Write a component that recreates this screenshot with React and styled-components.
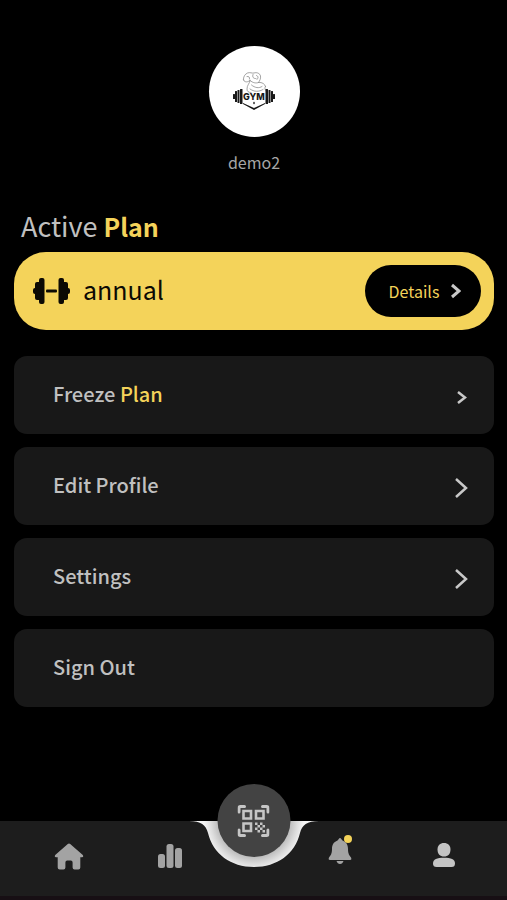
import React from 'react';
import styled, { createGlobalStyle } from 'styled-components';

const colors = {
    accent: '#f4d35a',
    card: '#181818',
    bar: '#1d1d1d',
    text: '#c0c0c0',
    icon: '#a3a3a3'
};

const GlobalStyle = createGlobalStyle`
    *, *::before, *::after {
        box-sizing: border-box;
    }

    body {
        margin: 0;
        background: #000;
        color: ${colors.text};
        font-family: "Noto Sans CJK JP", "Noto Sans", sans-serif;
    }

    button {
        border: 0;
        padding: 0;
        font: inherit;
        cursor: pointer;
    }
`;

const Page = styled.div`
    display: flex;
    flex-direction: column;
    min-height: 100vh;
`;

const Content = styled.main`
    flex: 1;
    display: flex;
    flex-direction: column;
    padding: 46px 13px 60px 14px;
`;

const ProfileHeader = styled.header`
    display: flex;
    flex-direction: column;
    align-items: center;
    gap: 12px;
`;

const Avatar = styled.div`
    width: 91px;
    height: 91px;
    border-radius: 50%;
    background: #fff;
    overflow: hidden;
`;

const UserName = styled.div`
    font-size: 16px;
    line-height: 26px;
    color: #a6a6a6;
`;

const SectionTitle = styled.h1`
    margin: 34px 0 9px 7px;
    font-size: 27px;
    line-height: 34px;
    font-weight: 400;
`;

const Highlight = styled.span`
    color: ${colors.accent};
`;

const TitleHighlight = styled(Highlight)`
    font-size: 25px;
    font-weight: 700;
`;

const PlanCard = styled.section`
    display: flex;
    align-items: center;
    height: 78px;
    padding: 0 13px 0 19px;
    border-radius: 32px;
    background: ${colors.accent};
    color: #0c0a04;
`;

const PlanName = styled.span`
    flex: 1;
    margin-left: 13px;
    padding-bottom: 4px;
    font-size: 25px;
    line-height: 34px;
`;

const DetailsButton = styled.button`
    display: flex;
    align-items: center;
    justify-content: center;
    gap: 11px;
    width: 116px;
    height: 52px;
    padding-left: 4px;
    border-radius: 26px;
    background: #000;
    color: ${colors.accent};
    font-size: 16px;
    line-height: 26px;
`;

const Menu = styled.nav`
    display: flex;
    flex-direction: column;
    gap: 13px;
    margin-top: 26px;
`;

const MenuButton = styled.button`
    display: flex;
    align-items: center;
    justify-content: space-between;
    height: 78px;
    padding: 4px 26px 0 39px;
    border-radius: 13px;
    background: ${colors.card};
    color: ${colors.text};
    text-align: left;
`;

const MenuLabel = styled.span`
    padding-bottom: 6px;
    font-size: 20px;
    line-height: 32px;
    font-weight: 500;
`;

const ChevronSlot = styled.span`
    display: flex;
    justify-content: center;
    width: 14px;
`;

const BottomBar = styled.nav`
    position: relative;
    display: flex;
    justify-content: space-between;
    height: 79px;
    padding: 0 52px 0 54px;
    border-bottom: 4px solid #170f14;
    background: ${colors.bar};
`;

const TabGroup = styled.div`
    flex: 1;
    display: flex;
    align-items: center;
    justify-content: space-between;
    padding-bottom: ${props => props.$bottom}px;
`;

const TabButton = styled.button`
    position: relative;
    display: flex;
    margin-bottom: ${props => (props.$raised ? 7 : 0)}px;
    background: none;
    color: ${props => (props.$active ? '#c4c4c4' : colors.icon)};
`;

const ScanSlot = styled.div`
    flex: 0 0 146px;
`;

const Notch = styled.svg`
    position: absolute;
    top: 0;
    left: 50%;
    transform: translateX(-50%);
`;

const ScanButton = styled.button`
    position: absolute;
    top: -37px;
    left: 50%;
    transform: translateX(-50%);
    display: flex;
    align-items: center;
    justify-content: center;
    width: 73px;
    height: 73px;
    border-radius: 50%;
    background: #434343;
    color: #c6c6c6;
`;

const Badge = styled.span`
    position: absolute;
    top: -3px;
    right: 0;
    width: 8px;
    height: 8px;
    border-radius: 50%;
    background: ${colors.accent};
`;

const Chevron = ({ width, height, stroke }) => (
    <svg width={width} height={height} viewBox={`0 0 ${width} ${height}`} fill='none' aria-hidden='true'>
        <path
            d={`M2 2L${width - 2} ${height / 2}L2 ${height - 2}`}
            stroke='#c8c8c8'
            strokeWidth={stroke}
        />
    </svg>
);

const GymLogo = () => (
    <svg width='91' height='91' viewBox='0 0 91 91' role='img' aria-label='Gym logo'>
        <g fill='none' stroke='#7c7c7c' strokeWidth='0.7' strokeLinejoin='round' strokeLinecap='round'>
            <path d='M34.500 34C34 31 36 28 38.500 27C41 26 43 27.500 45 27C48 26 51 27.500 51.500 30C52 32.500 50.500 35 49.500 36.500C53 36 56 38 56.500 40.500' />
            <path d='M34.500 34C36 37 39 36 41 34.500M38 30.500C40 30 41 31.500 40.500 33M44 28.500C43 31 44.500 33 47 32.500M47.500 29.500C49.500 30 49.500 32 48 33.500M41 34.500C44 37 47 37.500 49.500 36.500' />
            <path d='M41 34.500C40.500 38 38 39 38 43C38 45.500 39.500 46.500 42 46.500M42.500 39C46 42 50 42.500 53 40.500M41 43C45 46 50 46 54 43.500M56.500 40.500C55 42.500 56.500 44 58 46.500' />
        </g>
        <g fill='#191919'>
            <rect x='24' y='48' width='2' height='5' rx='0.5' />
            <rect x='26' y='45' width='2' height='11' rx='0.5' />
            <rect x='28.5' y='44' width='2' height='13' rx='0.5' />
            <rect x='31' y='43' width='2.5' height='15' rx='0.5' />
            <rect x='56.5' y='43' width='2.5' height='15' rx='0.5' />
            <rect x='59.5' y='44' width='2' height='13' rx='0.5' />
            <rect x='62' y='45' width='2' height='11' rx='0.5' />
            <rect x='64' y='48' width='2' height='5' rx='0.5' />
            <path d='M34 57l11 5 11-5v1L45 64l-11-6z' />
            <path d='M45 55.500l1 1.5-1 1.5-1-1.5z' />
        </g>
        <text
            x='45'
            y='54'
            textAnchor='middle'
            fontFamily='Inter, sans-serif'
            fontSize='9'
            fontWeight='800'
            fill='#191919'
        >
            GYM
        </text>
    </svg>
);

const DumbbellIcon = () => (
    <svg width='37' height='26' viewBox='0 0 37 26' fill='currentColor' aria-hidden='true'>
        <rect x='6' y='0' width='5.5' height='26' rx='2' />
        <rect x='2' y='4' width='6' height='18' rx='2' />
        <rect x='0' y='10' width='4' height='6' rx='2' />
        <rect x='13' y='11.5' width='11' height='3' rx='1' />
        <rect x='25.5' y='0' width='5.5' height='26' rx='2' />
        <rect x='29' y='4' width='6' height='18' rx='2' />
        <rect x='33' y='10' width='4' height='6' rx='2' />
    </svg>
);

const HomeIcon = () => (
    <svg width='30' height='27' viewBox='0 0 30 27' fill='currentColor' aria-hidden='true'>
        <path d='M13.8 1Q15 0 16.2 1L28.8 12Q30 14 28 14.3H26.3V24.5Q26.3 26.5 24.3 26.5H20.5Q18.6 26.5 18.6 24.5V19.5Q18.6 17.6 16.8 17.6H13.2Q11.4 17.6 11.4 19.5V24.5Q11.4 26.5 9.5 26.5H5.7Q3.7 26.5 3.7 24.5V14.3H2Q0 14 1.2 12Z' />
    </svg>
);

const StatsIcon = () => (
    <svg width='24' height='24' viewBox='0 0 24 24' fill='currentColor' aria-hidden='true'>
        <rect x='0' y='10' width='7' height='14' rx='2.5' />
        <rect x='8.5' y='0' width='7' height='24' rx='2.5' />
        <rect x='17' y='4' width='7' height='20' rx='2.5' />
    </svg>
);

const BellIcon = () => (
    <svg width='24' height='26' viewBox='0 0 24 26' fill='currentColor' aria-hidden='true'>
        <path d='M12 0C13 0 13.5 1.5 14.5 2.5C18.5 4 20 7 20 11C20 16 21.5 17.5 23 19.5Q24 22 22 22H2Q0 22 1 19.5C2.5 17.5 4 16 4 11C4 7 5.5 4 9.5 2.5C10.5 1.5 11 0 12 0Z' />
        <path d='M8.5 23H15.5Q14.5 26 12 26T8.5 23Z' />
    </svg>
);

const UserIcon = () => (
    <svg width='22' height='24' viewBox='0 0 22 24' fill='currentColor' aria-hidden='true'>
        <path d='M11 0C15 0 17.5 2.5 17.5 6.5C17.5 11 15 13.5 11 13.5S4.5 11 4.5 6.5C4.5 2.5 7 0 11 0Z' />
        <path d='M0 20.5C0 16 4 14.7 11 14.7S22 16 22 20.5Q22 24 18.5 24H3.5Q0 24 0 20.5Z' />
    </svg>
);

const ScanIcon = () => (
    <svg width='32' height='32' viewBox='0 0 32 32' aria-hidden='true'>
        <g fill='none' stroke='currentColor'>
            <path
                d='M1.5 7V3Q1.5 1.5 3 1.5H7M25 1.5H29Q30.5 1.5 30.5 3V7M30.5 25V29Q30.5 30.5 29 30.5H25M7 30.5H3Q1.5 30.5 1.5 29V25'
                strokeWidth='3'
                strokeLinecap='round'
            />
            <path d='M6 6h7.5v7.5h-7.5zM18.5 6h7.5v7.5h-7.5zM6 18.5h7.5v7.5h-7.5z' strokeWidth='2.6' />
        </g>
        <path
            fill='currentColor'
            d='M17.5 17.5h2.5v2.5h-2.5zM22.5 17.5h2.5v2.5h-2.5zM20 20h2.5v2.5h-2.5zM25 20h2.5v2.5h-2.5zM17.5 22.5h2.5v2.5h-2.5zM22.5 22.5h2.5v2.5h-2.5zM20 25h2.5v2.5h-2.5zM25 25h2.5v2.5h-2.5z'
        />
    </svg>
);

const NotchShape = () => (
    <Notch width='130' height='46' viewBox='0 0 130 46' aria-hidden='true'>
        <defs>
            <radialGradient id='notch-shade' gradientUnits='userSpaceOnUse' cx='65' cy='0' r='50'>
                <stop offset='0.72' stopColor='#bdbdbd' />
                <stop offset='0.86' stopColor='#dcdcdc' />
                <stop offset='1' stopColor='#f6f6f6' />
            </radialGradient>
        </defs>
        <path
            d='M0 0C12 0 17 4 19 12C24 33 42 46 65 46C88 46 106 33 111 12C113 4 118 0 130 0Z'
            fill='url(#notch-shade)'
        />
    </Notch>
);

const menuItems = [
    { label: 'Freeze', highlight: 'Plan', chevron: { width: 11, height: 15, stroke: 2.5 } },
    { label: 'Edit Profile', chevron: { width: 14, height: 22, stroke: 2.5 } },
    { label: 'Settings', chevron: { width: 14, height: 22, stroke: 2.5 } },
    { label: 'Sign Out' }
];

export default class App extends React.Component {
    render() {
        return (
            <Page>
                <GlobalStyle />
                <Content>
                    <ProfileHeader>
                        <Avatar>
                            <GymLogo />
                        </Avatar>
                        <UserName>demo2</UserName>
                    </ProfileHeader>
                    <SectionTitle>
                        Active <TitleHighlight>Plan</TitleHighlight>
                    </SectionTitle>
                    <PlanCard>
                        <DumbbellIcon />
                        <PlanName>annual</PlanName>
                        <DetailsButton type='button'>
                            Details
                            <Chevron width={11} height={16} stroke={3} />
                        </DetailsButton>
                    </PlanCard>
                    <Menu>
                        {menuItems.map(item => (
                            <MenuButton key={item.label} type='button'>
                                <MenuLabel>
                                    {item.label}
                                    {item.highlight && <Highlight> {item.highlight}</Highlight>}
                                </MenuLabel>
                                {item.chevron && (
                                    <ChevronSlot>
                                        <Chevron {...item.chevron} />
                                    </ChevronSlot>
                                )}
                            </MenuButton>
                        ))}
                    </Menu>
                </Content>
                <BottomBar>
                    <TabGroup $bottom={5}>
                        <TabButton type='button' aria-label='Home'>
                            <HomeIcon />
                        </TabButton>
                        <TabButton type='button' aria-label='Statistics'>
                            <StatsIcon />
                        </TabButton>
                    </TabGroup>
                    <ScanSlot>
                        <NotchShape />
                        <ScanButton type='button' aria-label='Scan code'>
                            <ScanIcon />
                        </ScanButton>
                    </ScanSlot>
                    <TabGroup $bottom={8}>
                        <TabButton type='button' aria-label='Notifications' $raised>
                            <BellIcon />
                            <Badge />
                        </TabButton>
                        <TabButton type='button' aria-label='Profile' $active>
                            <UserIcon />
                        </TabButton>
                    </TabGroup>
                </BottomBar>
            </Page>
        );
    }
}
